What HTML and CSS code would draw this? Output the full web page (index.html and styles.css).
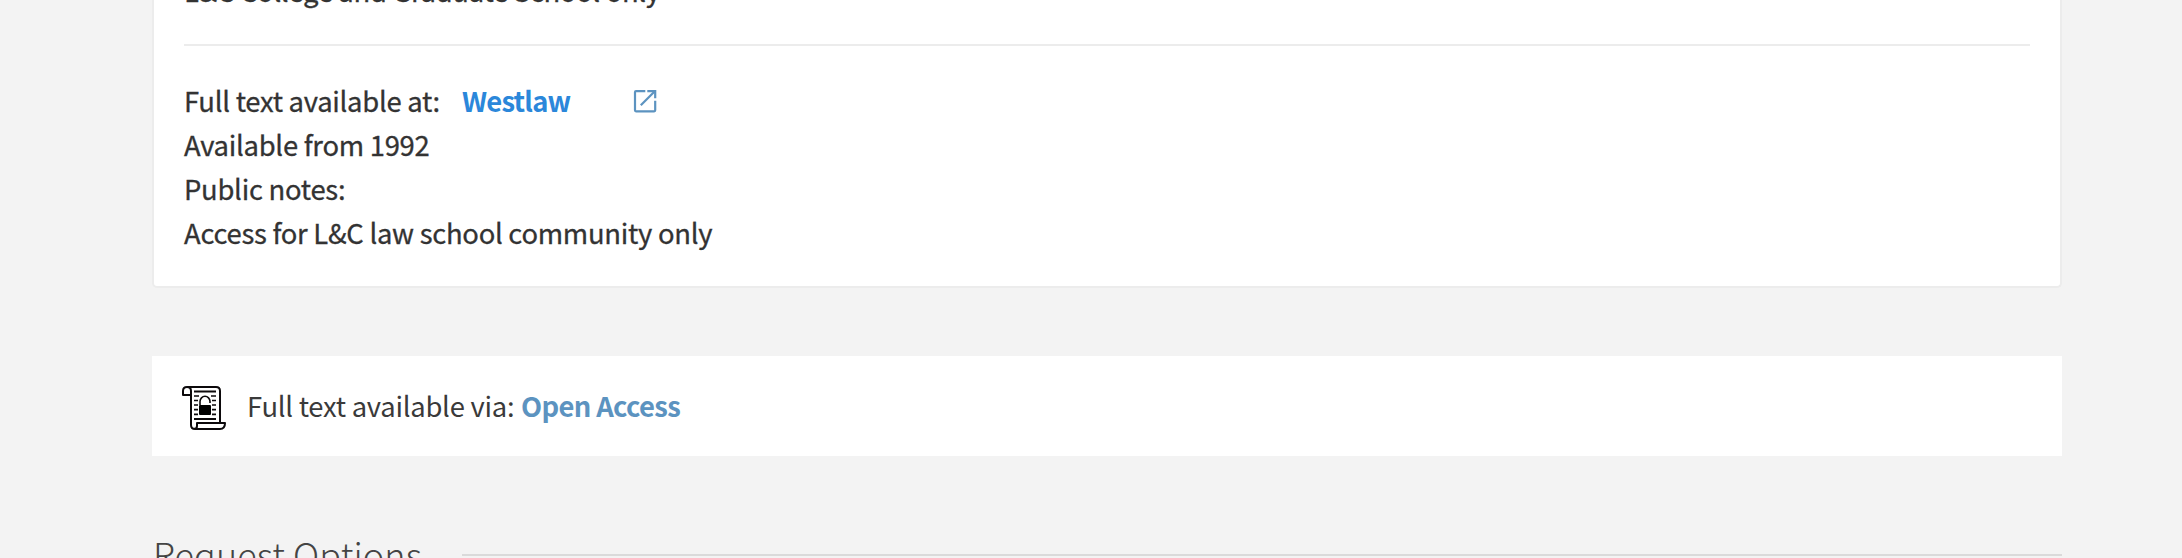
FILE: index.html
```html
<!DOCTYPE html>
<html lang="en">
<head>
<meta charset="utf-8">
<title>Full text availability</title>
<link rel="stylesheet" href="styles.css">
</head>
<body>
<main class="page">
  <section class="card">
    <p class="line previous">L&amp;C College and Graduate School only</p>
    <div class="service">
      <p class="line"><span class="label">Full text available at:</span><a class="source">Westlaw</a><svg class="external" viewBox="0 0 24 24" fill="none" stroke="#5c93c0" stroke-width="2.2"><path d="M12.3 2.2H3Q2 2.2 2 3.2V21.3Q2 22.3 3 22.3H21.2Q22.2 22.3 22.2 21.3V11.8"/><path d="M7.8 16.2L21.5 2.5"/><path d="M14.3 2.2H22.2V9.2"/></svg></p>
      <p class="line">Available from 1992</p>
      <p class="line">Public notes:</p>
      <p class="line">Access for L&amp;C law school community only</p>
    </div>
  </section>
  <section class="open-access">
    <svg class="scroll" viewBox="0 0 44 44" fill="none" stroke="#0c090b" stroke-width="2" stroke-linejoin="round">
      <path d="M5 1H34Q38 1 38 5V37M5 1Q1 1 1 5V9H9M5 1Q9 1 9 5V39Q9 43 13 43H38Q43 43 43 37H15V40Q15 43 12 43"/>
      <path d="M12 5.5H34M12 33H34" stroke-width="1.8"/>
      <path d="M12 10H17M12 14.5H16M12 19H16M12 23.7H16M12 28.3H16M29 10H34M30 14.5H34M30 19H34M30 23.7H34M30 28.3H34" stroke-width="1.7"/>
      <path d="M18 19V15.5A5 5.2 0 0 1 28 15.5V17" stroke-width="1.6"/>
      <rect x="17" y="19" width="12" height="10" rx="1" fill="#000" stroke="none"/>
    </svg>
    <p class="via"><span class="label">Full text available via:</span><a class="oa-link">Open Access</a></p>
  </section>
  <header class="section-head">
    <h2>Request Options</h2>
    <span class="rule"></span>
  </header>
</main>
</body>
</html>
```

FILE: styles.css
```css
html, body { margin: 0; height: 558px; overflow: hidden; }
body { background: #f3f3f3; color: #333; font-family: "Noto Sans CJK SC", "Noto Sans", sans-serif; }
p, h2 { margin: 0; }
.page { width: 1910px; margin-left: 152px; height: 558px; overflow: hidden; }
.card { box-sizing: border-box; height: 288px; background: #fff; border: 2px solid #ececec; border-top: 0; border-radius: 0 0 5px 5px; padding: 0 30px; overflow: hidden; }
.line { display: flex; align-items: center; height: 44px; line-height: 44px; font-size: 27.4px; letter-spacing: -.26px; white-space: nowrap; -webkit-text-stroke: .3px currentColor; }
.previous { margin-top: -32px; letter-spacing: -.3px; }
.service { border-top: 2px solid #ececec; margin-top: 32px; padding-top: 32px; }
.line .label { width: 278px; }
.source { width: 171px; color: #2b87da; font-weight: 700; letter-spacing: -.78px; -webkit-text-stroke: 0; }
.external { width: 24px; height: 24px; margin-top: 1px; }
.open-access { display: flex; align-items: center; height: 100px; margin-top: 68px; padding-left: 30px; box-sizing: border-box; background: #fff; }
.scroll { width: 44px; height: 44px; margin-top: 4px; }
.via { display: flex; margin: -3px 0 0 21px; font-size: 27.4px; letter-spacing: -.25px; line-height: 44px; color: #3a3a3a; white-space: nowrap; }
.via .label { width: 274px; }
.oa-link { color: #5c93c0; font-weight: 700; letter-spacing: -.65px; }
.section-head { display: flex; align-items: flex-start; margin-top: 72px; padding-left: 1px; }
.section-head h2 { width: 309px; font-size: 36px; line-height: 50px; font-weight: 300; letter-spacing: .1px; color: #444; white-space: nowrap; }
.rule { flex: 1; height: 2px; margin-top: 26px; background: #dadada; }
```
